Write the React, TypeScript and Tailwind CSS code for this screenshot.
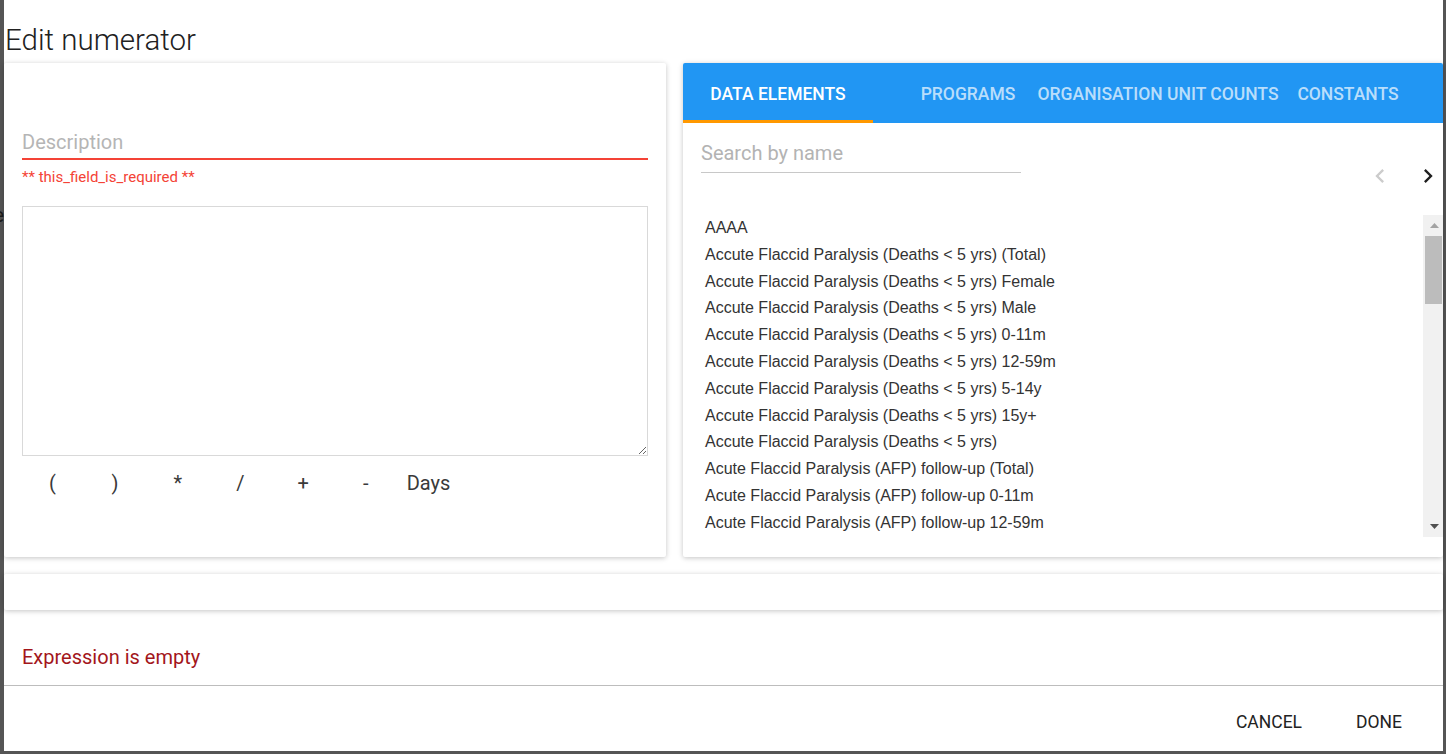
import React from "react";

const items = [
  "AAAA",
  "Accute Flaccid Paralysis (Deaths < 5 yrs) (Total)",
  "Accute Flaccid Paralysis (Deaths < 5 yrs) Female",
  "Accute Flaccid Paralysis (Deaths < 5 yrs) Male",
  "Accute Flaccid Paralysis (Deaths < 5 yrs) 0-11m",
  "Accute Flaccid Paralysis (Deaths < 5 yrs) 12-59m",
  "Accute Flaccid Paralysis (Deaths < 5 yrs) 5-14y",
  "Accute Flaccid Paralysis (Deaths < 5 yrs) 15y+",
  "Accute Flaccid Paralysis (Deaths < 5 yrs)",
  "Acute Flaccid Paralysis (AFP) follow-up (Total)",
  "Acute Flaccid Paralysis (AFP) follow-up 0-11m",
  "Acute Flaccid Paralysis (AFP) follow-up 12-59m",
];

const ops = ["(", ")", "*", "/", "+", "-", "Days"];
const tabs = ["Data elements", "Programs", "Organisation unit counts", "Constants"];

const shadow = "shadow-[0_1px_6px_rgba(0,0,0,0.12),0_1px_4px_rgba(0,0,0,0.12)]";

export default function App() {
  return (
    <div
      className="w-[1446px] h-[754px] bg-[#555555] flex overflow-hidden"
      style={{ fontFamily: "Roboto, 'Liberation Sans', sans-serif" }}
    >
      <div className="w-[4px] h-full relative overflow-hidden">
        <span className="absolute top-[203px] right-0 text-[20px] text-[#1a1a1a] leading-[24px]">e</span>
      </div>
      <div className="w-[1439px] h-[751px] bg-white flex flex-col">
        {/* Title */}
        <div className="h-[63px] pt-[25px] pl-[1px]">
          <h1 className="text-[29.5px] leading-[30px] font-light text-[#212121]">Edit numerator</h1>
        </div>

        {/* Cards */}
        <div className="h-[494px] flex gap-[17px]">
          {/* Left card */}
          <div className={`w-[662px] h-full bg-white rounded-[2px] ${shadow} pl-[18px] pr-[18px] flex flex-col`}>
            <input
              placeholder="Description"
              className="mt-[62px] h-[35px] w-full border-b-2 border-[#f44336] outline-none text-[20px] text-[#212121] placeholder:text-[#b5b5b5] bg-transparent"
            />
            <div className="mt-[8px] text-[15px] leading-[18px] text-[#f44336]">** this_field_is_required **</div>
            <textarea className="mt-[20px] h-[250px] w-full border border-[#d9d9d9] outline-none resize-y" />
            <div className="mt-[7px] h-[40px] flex -ml-[1px]">
              {ops.map((o) => (
                <div key={o} className="w-[62.7px] flex items-center justify-center text-[20px] text-[#3a3a3a]">
                  {o}
                </div>
              ))}
            </div>
          </div>

          {/* Right card */}
          <div className={`w-[760px] h-full bg-white rounded-[2px] ${shadow} flex flex-col overflow-hidden`}>
            <div className="h-[60px] bg-[#2196f3] flex">
              {tabs.map((t, i) => (
                <div
                  key={t}
                  className={`relative w-[190px] flex-none flex items-center justify-center pt-[3px] whitespace-nowrap uppercase text-[17.5px] font-medium ${
                    i === 0 ? "text-white" : "text-[rgba(255,255,255,0.7)]"
                  }`}
                >
                  {t}
                  {i === 0 && <div className="absolute left-0 right-0 bottom-0 h-[3px] bg-[#ff9800]" />}
                </div>
              ))}
            </div>
            <div className="h-[92px] flex items-start">
              <input
                placeholder="Search by name"
                className="ml-[18px] mt-[11px] w-[320px] h-[39px] border-b border-[#c8c8c8] outline-none text-[20px] placeholder:text-[#b3b3b3] bg-transparent"
              />
              <div className="ml-auto mt-[39px] mr-[1px] flex gap-[20px]">
                <svg width="28" height="28" viewBox="0 0 24 24">
                  <path d="M15.41 7.41 14 6l-6 6 6 6 1.41-1.41L10.83 12z" fill="#cccccc" />
                </svg>
                <svg width="28" height="28" viewBox="0 0 24 24">
                  <path d="M10 6 8.59 7.41 13.17 12l-4.58 4.59L10 18l6-6z" fill="#1f1f1f" />
                </svg>
              </div>
            </div>
            <div className="h-[322px] flex">
              <div className="flex-1 pl-[22px] overflow-hidden" style={{ fontFamily: "'Liberation Sans', Arial, sans-serif" }}>
                {items.map((it, i) => (
                  <div key={i} className="h-[26.8px] leading-[26.8px] text-[16px] text-[#333333] whitespace-nowrap">
                    {it}
                  </div>
                ))}
              </div>
              <div className="w-[20px] bg-[#f1f1f1] flex flex-col">
                <div className="h-[21px] flex items-center justify-center pl-[2px]">
                  <svg width="9" height="5" viewBox="0 0 9 5">
                    <path d="M0 5 L4.5 0 L9 5 Z" fill="#a3a3a3" />
                  </svg>
                </div>
                <div className="ml-[2px] mr-[1px] h-[68px] bg-[#bcbcbc]" />
                <div className="flex-1" />
                <div className="h-[21px] flex items-center justify-center pl-[2px]">
                  <svg width="9" height="5" viewBox="0 0 9 5">
                    <path d="M0 0 L9 0 L4.5 5 Z" fill="#505050" />
                  </svg>
                </div>
              </div>
            </div>
          </div>
        </div>

        {/* Strip card */}
        <div className={`mt-[17px] h-[36px] bg-white rounded-[2px] ${shadow}`} />

        <div className="mt-[35px] mb-[16px] pl-[18px] text-[20px] leading-[24px] text-[#a3161b]">Expression is empty</div>

        <div className="border-t border-[#bdbdbd] flex-1 flex justify-end items-start pt-[24px] pr-[41px] gap-[54px]">
          <span className="text-[17.5px] leading-[24px] text-[#222222] uppercase">Cancel</span>
          <span className="text-[17.5px] leading-[24px] text-[#222222] uppercase">Done</span>
        </div>
      </div>
      <div className="flex-1" />
    </div>
  );
}
